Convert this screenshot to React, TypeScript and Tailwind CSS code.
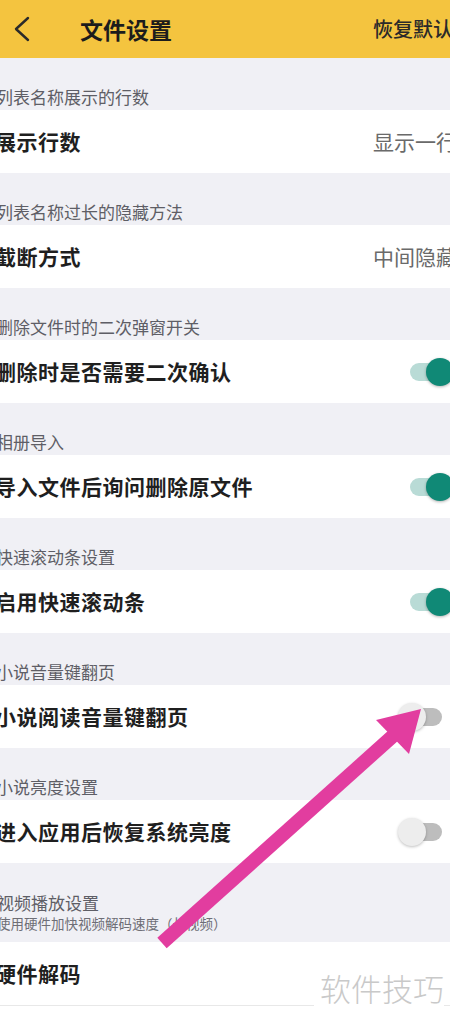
import React from "react";

type Item = {
  label: string;
  title: string;
  value?: string;
  toggle?: boolean;
};

const items: Item[] = [
  { label: "列表名称展示的行数", title: "展示行数", value: "显示一行" },
  { label: "列表名称过长的隐藏方法", title: "截断方式", value: "中间隐藏" },
  { label: "删除文件时的二次弹窗开关", title: "删除时是否需要二次确认", toggle: true },
  { label: "相册导入", title: "导入文件后询问删除原文件", toggle: true },
  { label: "快速滚动条设置", title: "启用快速滚动条", toggle: true },
  { label: "小说音量键翻页", title: "小说阅读音量键翻页", toggle: false },
  { label: "小说亮度设置", title: "进入应用后恢复系统亮度", toggle: false },
];

function Toggle({ on }: { on: boolean }) {
  return (
    <div className="relative h-[30px] w-[60px] shrink-0 mr-[-6px]">
      {on ? (
        <>
          <div className="absolute left-[14px] top-[6px] h-[18px] w-[46px] rounded-full bg-[#b9dbd6]" />
          <div className="absolute left-[30px] top-[1px] h-[28px] w-[28px] rounded-full bg-[#108976] shadow-[0_1px_3px_rgba(0,0,0,0.3)]" />
        </>
      ) : (
        <>
          <div className="absolute left-[12px] top-[6px] h-[18px] w-[34px] rounded-full bg-[#bdbdbd]" />
          <div className="absolute left-[2px] top-[1px] h-[28px] w-[28px] rounded-full bg-[#ededed] shadow-[0_1px_3px_rgba(0,0,0,0.25)]" />
        </>
      )}
    </div>
  );
}

function Label({ text }: { text: string }) {
  return (
    <div className="flex h-[52px] items-end bg-[#f0f0f5] pb-[1px]">
      <span className="ml-[-4px] whitespace-nowrap text-[17px] leading-6 text-[#5e5e66]">{text}</span>
    </div>
  );
}

function Row({ item }: { item: Item }) {
  return (
    <div className="flex h-[63px] items-center justify-between bg-white">
      <span className="ml-[-5px] whitespace-nowrap text-[21px] font-semibold tracking-[0.5px] text-[#1f1f1f]">
        {item.title}
      </span>
      {item.value && (
        <span className="mr-[-7px] whitespace-nowrap text-[21px] text-[#6a6a6a]">{item.value}</span>
      )}
      {item.toggle !== undefined && <Toggle on={item.toggle} />}
    </div>
  );
}

export default function App() {
  return (
    <div
      className="relative h-[1026px] w-[450px] overflow-hidden bg-white"
      style={{ fontFamily: '"Noto Sans CJK SC", "Noto Sans", sans-serif' }}
    >
      <div className="flex h-[58px] items-center bg-[#f4c43f]">
        <div className="w-[80px] shrink-0 pl-[13px]">
          <svg width="18" height="26" viewBox="0 0 18 26" fill="none">
            <path d="M15 2 L3 13 L15 24" stroke="#2a2a2a" strokeWidth="2.4" strokeLinecap="round" strokeLinejoin="round" />
          </svg>
        </div>
        <span className="flex-1 text-[23px] font-bold text-[#1c1c1c]">文件设置</span>
        <span className="mr-[-3px] whitespace-nowrap text-[20px] font-medium text-[#2a2a2a]">恢复默认</span>
      </div>

      {items.map((it) => (
        <div key={it.title}>
          <Label text={it.label} />
          <Row item={it} />
        </div>
      ))}

      <div className="flex h-[79px] flex-col justify-end bg-[#f0f0f5] pb-[9px]">
        <span className="ml-[-3px] whitespace-nowrap text-[17px] leading-[20px] text-[#5e5e66]">视频播放设置</span>
        <span className="ml-[-3px] whitespace-nowrap text-[13.5px] leading-[20px] text-[#6e6e76]">
          使用硬件加快视频解码速度（长视频）
        </span>
      </div>
      <div className="flex h-[63px] items-center bg-white">
        <span className="ml-[-5px] whitespace-nowrap text-[21px] font-semibold tracking-[0.5px] text-[#1f1f1f]">硬件解码</span>
      </div>
      <div className="h-px bg-[#e8e8e8]" />
      <div className="h-[40px] bg-white" />

      <div className="absolute left-[314px] top-[968px] bg-white pl-[6px] text-[31px] font-light leading-[40px] text-[#c9c9c9]">
        软件技巧
      </div>

      <svg className="pointer-events-none absolute left-0 top-0" width="450" height="1026" viewBox="0 0 450 1026">
        <line x1="162" y1="943" x2="394" y2="735" stroke="#e23d9f" strokeWidth="14" />
        <polygon points="421,709 376,720 409,754" fill="#e23d9f" />
      </svg>
    </div>
  );
}
